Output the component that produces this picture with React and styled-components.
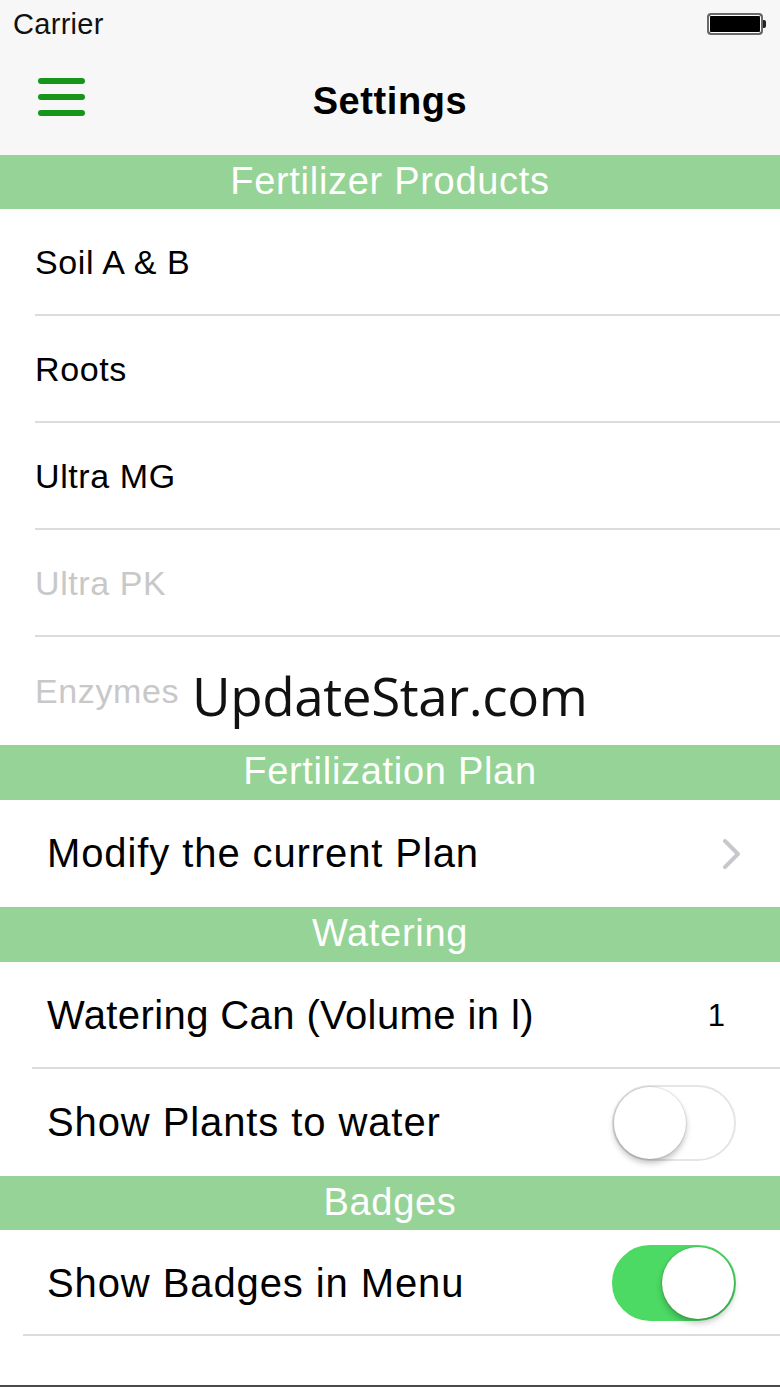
import styled, { createGlobalStyle } from "styled-components"

const GlobalStyle = createGlobalStyle`
    body {
        margin: 0;
        background: #ffffff;
        font-family: "Liberation Sans", Arial, sans-serif;
    }
`

const Screen = styled.div`
    position: relative;
    width: 780px;
    height: 1387px;
    overflow: hidden;
    background: #ffffff;
    border-bottom: 2px solid #4a4a4a;
    box-sizing: border-box;
`

const TopBar = styled.div`
    background: #f7f7f7;
    height: 155px;
    display: flex;
    flex-direction: column;
`

const StatusBar = styled.div`
    height: 48px;
    display: flex;
    align-items: center;
    justify-content: space-between;
    padding: 0 14px 0 13px;
    font-size: 29px;
    letter-spacing: 0.3px;
    color: #111;
`

const Battery = styled.div`
    display: flex;
    align-items: center;
`

const BatteryBody = styled.div`
    width: 52px;
    height: 18px;
    border: 2px solid #6a6a6a;
    border-radius: 4px;
    background: #000;
    box-shadow: inset 0 0 0 1px #fff;
`

const BatteryTip = styled.div`
    width: 3px;
    height: 8px;
    background: #222;
    border-radius: 0 2px 2px 0;
`

const NavBar = styled.div`
    flex: 1;
    display: flex;
    align-items: center;
    justify-content: center;
    position: relative;
`

const MenuButton = styled.div`
    position: absolute;
    left: 38px;
    top: 30px;
    display: flex;
    flex-direction: column;
    gap: 10px;
`

const MenuLine = styled.div`
    width: 47px;
    height: 6px;
    border-radius: 3px;
    background: #15961a;
`

const Title = styled.h1`
    margin: 0 0 0 0;
    font-size: 38px;
    letter-spacing: 0.6px;
    font-weight: bold;
    color: #000;
`

const SectionHeader = styled.div`
    height: ${(p) => p.$h || 54}px;
    background: #96d396;
    color: #ffffff;
    font-size: 38px;
    letter-spacing: 0.7px;
    display: flex;
    align-items: center;
    justify-content: center;
    padding-bottom: 2px;
    box-sizing: border-box;
`

const Row = styled.div`
    height: ${(p) => p.$h || 107}px;
    display: flex;
    align-items: center;
    justify-content: space-between;
    padding-left: ${(p) => p.$pad || 35}px;
    padding-right: 45px;
    box-sizing: border-box;
    position: relative;
    font-size: ${(p) => p.$size || 34}px;
    letter-spacing: ${(p) => p.$ls || 0.6}px;
    color: ${(p) => (p.$muted ? "#c8c8c8" : "#000")};

    ${(p) =>
        p.$line &&
        `
        &::after {
            content: "";
            position: absolute;
            left: ${p.$line}px;
            right: 0;
            bottom: 0;
            height: 2px;
            background: #dcdcdc;
        }
    `}
`

const Value = styled.span`
    font-size: 31px;
    letter-spacing: 0;
    margin-right: 10px;
`

const Toggle = styled.div`
    width: 124px;
    height: 76px;
    border-radius: 38px;
    box-sizing: border-box;
    background: ${(p) => (p.$on ? "#4cd964" : "#fff")};
    border: 2px solid ${(p) => (p.$on ? "#4cd964" : "#e5e5e5")};
    display: flex;
    align-items: center;
    justify-content: ${(p) => (p.$on ? "flex-end" : "flex-start")};
    margin-right: -1px;
`

const Knob = styled.div`
    width: 72px;
    height: 72px;
    border-radius: 50%;
    background: #fff;
    box-shadow: 0 4px 6px rgba(0, 0, 0, 0.25), 0 0 0 1px rgba(0, 0, 0, 0.08);
`

const Watermark = styled.div`
    position: absolute;
    left: 192px;
    top: 659px;
    font-family: "Open Sans", "Noto Sans", sans-serif;
    font-size: 53px;
    color: #111;
    letter-spacing: -0.4px;
`

function Chevron() {
    return (
        <svg width="22" height="32" viewBox="0 0 22 32" style={{ marginRight: -8 }}>
            <path d="M4 3 L17 16 L4 29" fill="none" stroke="#c7c7cc" strokeWidth="4" strokeLinecap="round" strokeLinejoin="round" />
        </svg>
    )
}

const products = [
    { name: "Soil A & B" },
    { name: "Roots" },
    { name: "Ultra MG" },
    { name: "Ultra PK", muted: true },
    { name: "Enzymes", muted: true, last: true },
]

function App() {
    return (
        <Screen>
            <GlobalStyle />
            <TopBar>
                <StatusBar>
                    <span>Carrier</span>
                    <Battery>
                        <BatteryBody />
                        <BatteryTip />
                    </Battery>
                </StatusBar>
                <NavBar>
                    <MenuButton>
                        <MenuLine />
                        <MenuLine />
                        <MenuLine />
                    </MenuButton>
                    <Title>Settings</Title>
                </NavBar>
            </TopBar>

            <SectionHeader>Fertilizer Products</SectionHeader>
            {products.map((p) => (
                <Row key={p.name} $muted={p.muted} $line={p.last ? 0 : 35} $h={p.last ? 108 : 107}>
                    {p.name}
                </Row>
            ))}

            <SectionHeader $h={55}>Fertilization Plan</SectionHeader>
            <Row $pad={47} $size={40} $ls={0.9}>
                Modify the current Plan
                <Chevron />
            </Row>

            <SectionHeader $h={55}>Watering</SectionHeader>
            <Row $pad={47} $size={40} $ls={0.4} $line={32}>
                Watering Can (Volume in l)
                <Value>1</Value>
            </Row>
            <Row $pad={47} $size={40} $ls={0.9} $h={107}>
                Show Plants to water
                <Toggle>
                    <Knob />
                </Toggle>
            </Row>

            <SectionHeader>Badges</SectionHeader>
            <Row $pad={47} $size={40} $ls={0.9} $line={23} $h={106}>
                Show Badges in Menu
                <Toggle $on>
                    <Knob />
                </Toggle>
            </Row>

            <Watermark>UpdateStar.com</Watermark>
        </Screen>
    )
}

export default App
